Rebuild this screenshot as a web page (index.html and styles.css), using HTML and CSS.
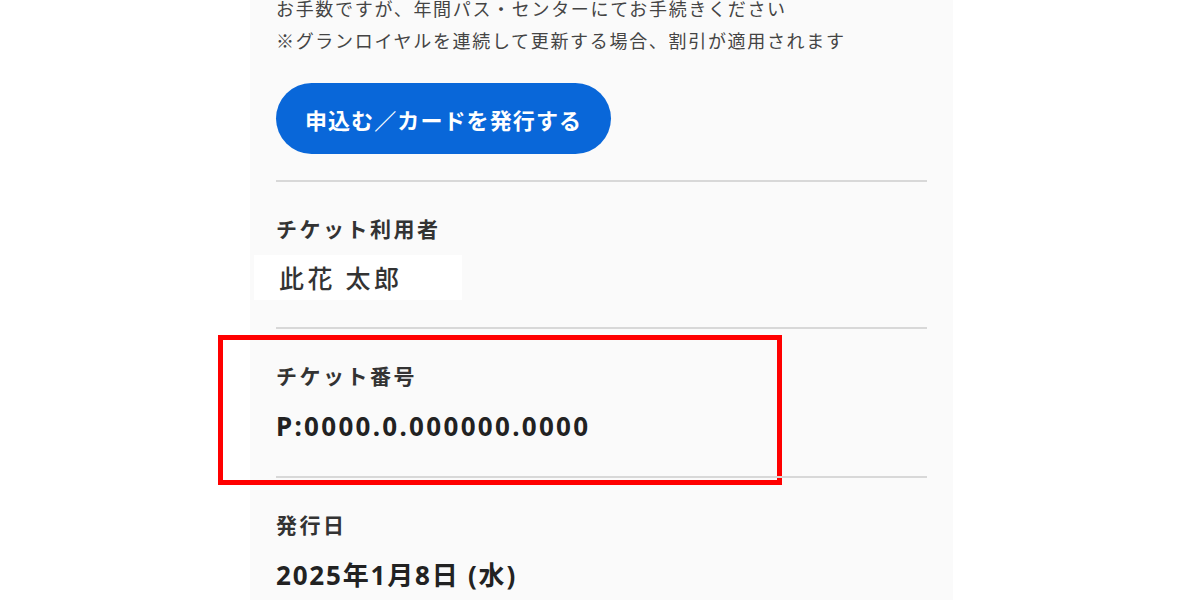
FILE: index.html
```html
<!DOCTYPE html>
<html lang="ja">
<head>
<meta charset="utf-8">
<title>チケット情報</title>
<link rel="stylesheet" href="styles.css">
</head>
<body>
<main class="panel">
  <div class="notes">
    <p>お手数ですが、年間パス・センターにてお手続きください</p>
    <p>※グランロイヤルを連続して更新する場合、割引が適用されます</p>
  </div>
  <a class="apply-btn" href="#">申込む／カードを発行する</a>
  <dl class="info">
    <div class="info-row">
      <dt class="info-label">チケット利用者</dt>
      <dd class="info-value info-value--name"><span class="name-box">此花 太郎</span></dd>
    </div>
    <div class="info-row info-row--marked">
      <dt class="info-label">チケット番号</dt>
      <dd class="info-value info-value--code">P:0000.0.000000.0000</dd>
      <span class="highlight-frame" aria-hidden="true"></span>
    </div>
    <div class="info-row">
      <dt class="info-label">発行日</dt>
      <dd class="info-value">2025年1月8日 (水)</dd>
    </div>
  </dl>
</main>
</body>
</html>
```
FILE: styles.css
```css
html, body {
  margin: 0;
  padding: 0;
  background: #ffffff;
  height: 100%;
  overflow: hidden;
}

body {
  font-family: "Noto Sans", "Noto Sans CJK JP", sans-serif;
  color: #222;
}

.panel {
  width: 703px;
  margin: 0 0 0 250px;
  min-height: 100%;
  background: #fafafa;
  padding: 0 26px;
  box-sizing: border-box;
}

.notes {
  margin-top: -8px;
}

.notes p {
  margin: 0;
  font-family: "Noto Sans CJK JP", sans-serif;
  font-size: 18px;
  line-height: 32px;
  letter-spacing: 1.68px;
  color: #444;
}

.apply-btn {
  display: flex;
  align-items: center;
  justify-content: center;
  width: 335px;
  height: 71px;
  margin-top: 27px;
  border-radius: 36px;
  background: #0967d9;
  color: #fff;
  text-decoration: none;
  font-family: "Noto Sans CJK JP", sans-serif;
  font-weight: 700;
  font-size: 22px;
  letter-spacing: 1.1px;
}

.info {
  margin: 26px 0 0;
}

.info-row {
  position: relative;
  border-top: 2px solid #d8d8d8;
  padding: 31px 0 30px;
}

.info-label {
  margin: 0;
  font-family: "Noto Sans CJK JP", sans-serif;
  font-weight: 700;
  font-size: 21px;
  line-height: 30px;
  letter-spacing: 2.5px;
  color: #333;
}

.info-value {
  margin: 16px 0 0;
  font-weight: 700;
  font-size: 26px;
  line-height: 40px;
  letter-spacing: 1.8px;
  color: #222;
}

.info-value--code {
  letter-spacing: 2.3px;
}

.info-value--name {
  margin-top: 14px;
  font-family: "Noto Sans CJK JP", sans-serif;
  font-weight: 500;
  font-size: 25px;
  letter-spacing: 3.6px;
  color: #333;
}

.name-box {
  background: #ffffff;
  margin-left: -22px;
  padding: 4px 59px 5px 25px;
}

.highlight-frame {
  position: absolute;
  top: 6px;
  left: -58px;
  width: 564px;
  height: 150px;
  border: 5px solid #ff0000;
  box-sizing: border-box;
  pointer-events: none;
}
```
